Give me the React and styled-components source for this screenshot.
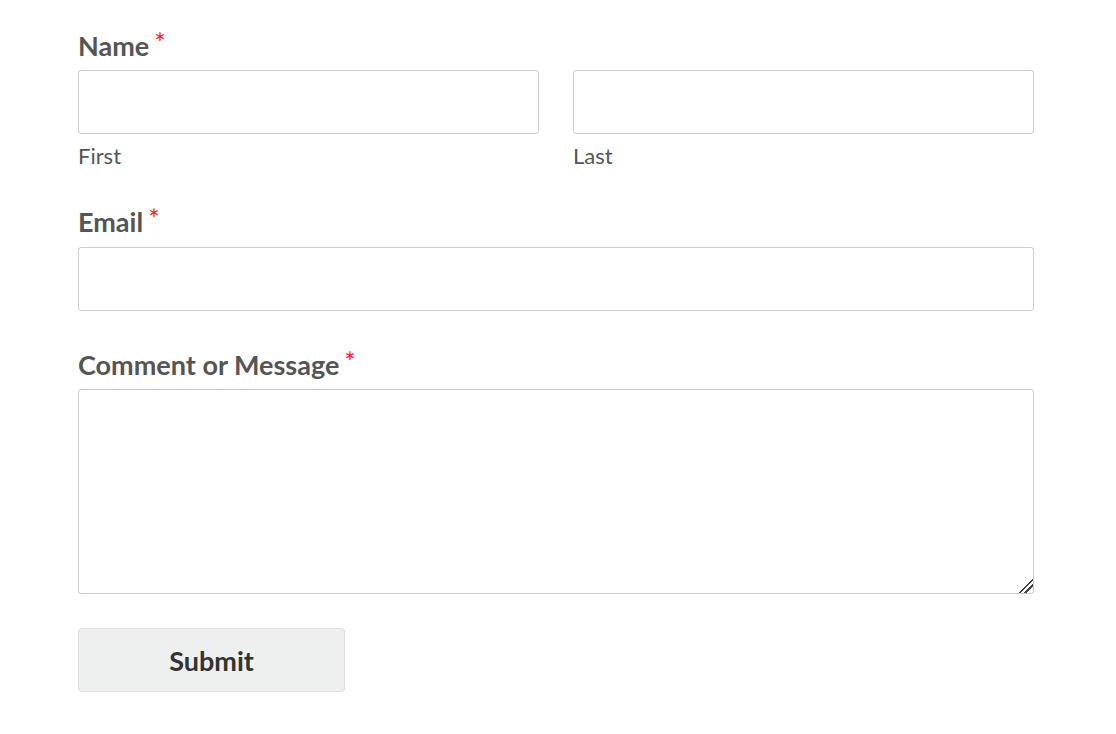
import React from 'react';
import styled, { createGlobalStyle } from 'styled-components';

const GlobalStyle = createGlobalStyle`
    body {
        margin: 0;
        background: #ffffff;
        font-family: Lato, "Open Sans", sans-serif;
    }
`;

const Form = styled.form`
    width: 956px;
    padding: 29px 0 0 78px;
    display: flex;
    flex-direction: column;
`;

const Field = styled.div`
    margin-bottom: ${(props) => props.gap || 0}px;
`;

const Label = styled.label`
    display: block;
    font-size: 27px;
    font-weight: 700;
    line-height: 34px;
    color: #555555;
    margin-bottom: ${(props) => props.space || 7}px;
`;

const Required = styled.span`
    color: #ff2020;
    font-weight: 400;
    font-size: 27px;
    margin-left: 5px;
    vertical-align: top;
    line-height: 28px;
`;

const Row = styled.div`
    display: grid;
    grid-template-columns: 1fr 1fr;
    column-gap: 34px;
`;

const Input = styled.input`
    display: block;
    box-sizing: border-box;
    width: 100%;
    height: 64px;
    border: 1px solid #cccccc;
    border-radius: 3px;
    background: #ffffff;
    font-family: inherit;
    font-size: 20px;
    padding: 0 12px;
`;

const Sublabel = styled.span`
    display: block;
    font-size: 22px;
    line-height: 26px;
    color: #555555;
    margin-top: 9px;
`;

const TextArea = styled.textarea`
    display: block;
    box-sizing: border-box;
    width: 100%;
    height: 205px;
    border: 1px solid #cccccc;
    border-radius: 3px;
    font-family: inherit;
    font-size: 20px;
    padding: 10px 12px;

    &::-webkit-resizer {
        background: linear-gradient(
            135deg,
            transparent 0 52%,
            #444444 52% 60%,
            transparent 60% 70%,
            #444444 70% 78%,
            transparent 78%
        );
    }
`;

const Button = styled.button`
    width: 267px;
    height: 64px;
    background: #eeefef;
    border: 1px solid #dddddd;
    border-radius: 4px;
    font-family: inherit;
    font-size: 27px;
    font-weight: 700;
    color: #333333;
`;

export default function App() {
    return (
        <>
            <GlobalStyle />
            <Form onSubmit={(e) => e.preventDefault()}>
                <Field gap={36}>
                    <Label>
                        Name<Required>*</Required>
                    </Label>
                    <Row>
                        <div>
                            <Input type="text" />
                            <Sublabel>First</Sublabel>
                        </div>
                        <div>
                            <Input type="text" />
                            <Sublabel>Last</Sublabel>
                        </div>
                    </Row>
                </Field>
                <Field gap={37}>
                    <Label space={8}>
                        Email<Required>*</Required>
                    </Label>
                    <Input type="email" />
                </Field>
                <Field gap={34}>
                    <Label>
                        Comment or Message<Required>*</Required>
                    </Label>
                    <TextArea />
                </Field>
                <div>
                    <Button type="submit">Submit</Button>
                </div>
            </Form>
        </>
    );
}
